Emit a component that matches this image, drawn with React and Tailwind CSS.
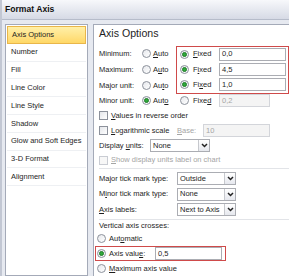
import React from "react";

const font = { fontFamily: '"Liberation Sans", Arial, sans-serif' };

const Radio = ({ checked, className = "" }) => (
  <span
    className={`w-[9px] h-[9px] rounded-full border border-[#8c919b] bg-gradient-to-br from-[#e6e8ec] to-white flex items-center justify-center shrink-0 ${className}`}
  >
    {checked && <span className="w-[5px] h-[5px] rounded-full bg-[#2fa83a] border border-[#1e7d27]" />}
  </span>
);

const Check = ({ disabled }) => (
  <span
    className={`w-[9px] h-[9px] border shrink-0 ${
      disabled ? "border-[#c9ccd3] bg-[#f7f7f7]" : "border-[#8c919b] bg-gradient-to-br from-[#e4e6ea] to-white"
    }`}
  />
);

const Input = ({ value, disabled, className = "" }) => (
  <div
    className={`h-[13px] border flex items-center px-[2px] ${
      disabled ? "border-[#d3d5da] bg-[#f4f4f4] text-[#a5a5a5]" : "border-[#abadb3] bg-white text-[#1e1e1e]"
    } ${className}`}
  >
    {value}
  </div>
);

const Select = ({ value, className = "" }) => (
  <div className={`h-[13px] border border-[#abadb3] bg-white flex items-stretch ${className}`}>
    <span className="flex-1 flex items-center px-[2px] whitespace-nowrap">{value}</span>
    <span className="w-[11px] border-l border-[#c6c8cd] bg-gradient-to-b from-white to-[#e6e8ee] flex items-center justify-center">
      <svg width="7" height="5" viewBox="0 0 7 5">
        <path d="M1 1 L3.5 3.5 L6 1" stroke="#222" strokeWidth="1.5" fill="none" />
      </svg>
    </span>
  </div>
);

const U = ({ children }) => <span className="underline underline-offset-[1px]">{children}</span>;

const navItems = [
  "Axis Options",
  "Number",
  "Fill",
  "Line Color",
  "Line Style",
  "Shadow",
  "Glow and Soft Edges",
  "3-D Format",
  "Alignment",
];

export default function App() {
  return (
    <div
      style={font}
      className="w-[289px] h-[276px] overflow-hidden bg-[#e6e9f0] border-l-[2px] border-[#c2c7d3] flex flex-col text-[7.5px] text-[#1e1e1e] leading-none"
    >
      {/* title bar */}
      <div className="h-[20px] shrink-0 bg-gradient-to-b from-[#f7f8fb] to-[#d6dae5] border-b border-[#b6bcca] flex items-center px-[3px]">
        <span className="font-bold text-[8.6px] text-[#111]">Format Axis</span>
      </div>

      <div className="flex flex-1 pt-[4px] pl-[3px] gap-[5px] min-h-0">
        {/* left nav */}
        <div className="w-[83px] shrink-0 bg-white border border-[#a4aab8] p-[1px] flex flex-col">
          {navItems.map((item, i) => (
            <div
              key={item}
              className={`h-[17.8px] shrink-0 flex items-center px-[4px] whitespace-nowrap ${
                i === 0
                  ? "bg-gradient-to-b from-[#fff0a8] to-[#ffd866] border border-[#e9b64a]"
                  : "border-b border-[#eef0f3]"
              }`}
            >
              {item}
            </div>
          ))}
        </div>

        {/* right panel */}
        <div className="flex-1 bg-white border-l border-t border-[#a4aab8] pl-[5px] pt-[2px] flex flex-col">
          <div className="h-[14px] flex items-center text-[10.6px]">Axis Options</div>

          {/* min / max / major */}
          <div className="flex mt-[5px]">
            <div className="flex flex-col">
              {[
                ["Minimum:", <><U>A</U>uto</>],
                ["Maximum:", <>A<U>u</U>to</>],
                ["Major unit:", <>Au<U>t</U>o</>],
              ].map(([label, auto]) => (
                <div key={label} className="h-[16px] flex items-center">
                  <span className="w-[43px]">{label}</span>
                  <Radio />
                  <span className="ml-[2px] w-[23px]">{auto}</span>
                </div>
              ))}
            </div>
            <div className="flex-1 border border-[#cf4a4a] flex flex-col">
              {[
                [<><U>F</U>ixed</>, "0,0"],
                [<>F<U>i</U>xed</>, "4,5"],
                [<>Fi<U>x</U>ed</>, "1,0"],
              ].map(([fixed, val], i) => (
                <div key={i} className="h-[15.3px] flex items-center pl-[3px]">
                  <Radio checked />
                  <span className="ml-[4px] w-[26px]">{fixed}</span>
                  <Input value={val} className="w-[67px]" />
                </div>
              ))}
            </div>
          </div>

          {/* minor unit */}
          <div className="h-[15px] flex items-center">
            <span className="w-[43px]">Minor unit:</span>
            <Radio checked />
            <span className="ml-[2px] w-[27px]">Aut<U>o</U></span>
            <Radio />
            <span className="ml-[4px] w-[26px]">Fixe<U>d</U></span>
            <Input value="0,2" disabled className="w-[51px]" />
          </div>

          <div className="h-[15px] flex items-center gap-[3px]">
            <Check />
            <span><U>V</U>alues in reverse order</span>
          </div>

          <div className="h-[16px] flex items-center">
            <Check />
            <span className="ml-[3px] w-[66px]"><U>L</U>ogarithmic scale</span>
            <span className="w-[26px] text-[#a5a5a5]"><U>B</U>ase:</span>
            <Input value="10" disabled className="w-[67px]" />
          </div>

          <div className="h-[16px] flex items-center">
            <span className="w-[51px]">Display <U>u</U>nits:</span>
            <Select value="None" className="w-[60px]" />
          </div>

          <div className="h-[14px] flex items-center gap-[3px] text-[#a5a5a5]">
            <Check disabled />
            <span><U>S</U>how display units label on chart</span>
          </div>

          <div className="h-px bg-[#e2e4e8] mt-[1px] mb-[2px]" />

          {[
            [<>Major tick mark type:</>, "Outside"],
            [<>M<U>i</U>nor tick mark type:</>, "None"],
            [<><U>A</U>xis labels:</>, "Next to Axis"],
          ].map(([label, val], i) => (
            <div key={i} className="h-[16px] flex items-center">
              <span className="w-[78px]">{label}</span>
              <Select value={val} className="w-[59px]" />
            </div>
          ))}

          <div className="h-px bg-[#e2e4e8] mt-[2px]" />

          <div className="h-[10px] flex items-center mt-[1px]">Vertical axis crosses:</div>

          <div className="-ml-[4px] flex flex-col">
            <div className="h-[15px] flex items-center pl-[2px]">
              <Radio />
              <span className="ml-[3px]">Aut<U>o</U>matic</span>
            </div>
            <div className="h-[15px] w-[131px] border border-[#cf4a4a] flex items-center pl-[1px]">
              <Radio checked />
              <span className="ml-[3px] w-[46px]">Axis valu<U>e</U>:</span>
              <Input value="0,5" className="w-[67px]" />
            </div>
            <div className="h-[15px] flex items-center pl-[2px]">
              <Radio />
              <span className="ml-[3px]"><U>M</U>aximum axis value</span>
            </div>
          </div>
        </div>
      </div>
    </div>
  );
}
